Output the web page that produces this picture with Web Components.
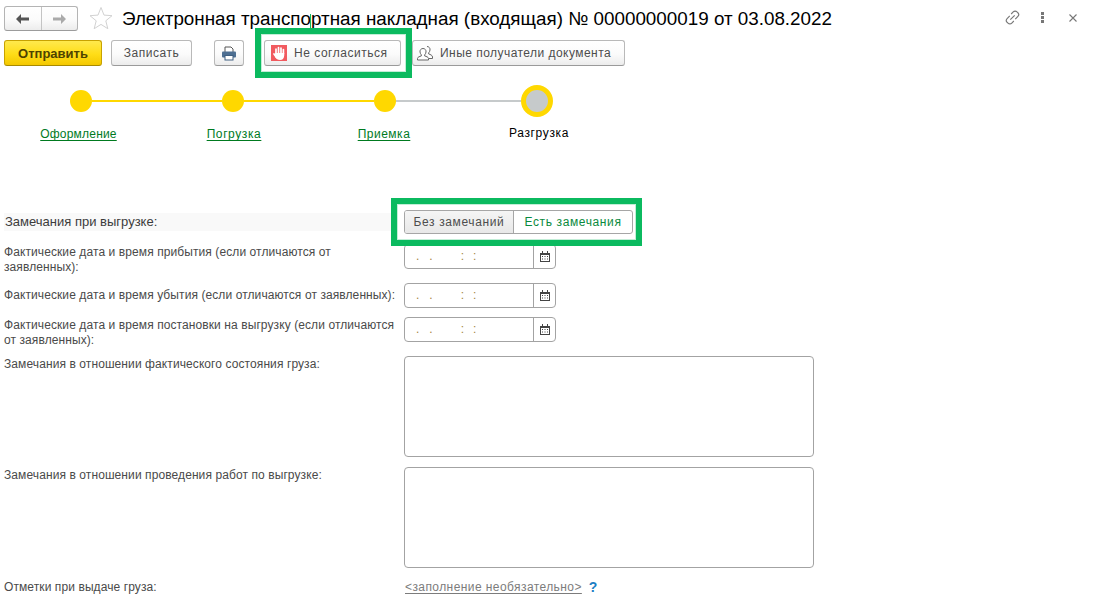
<!DOCTYPE html>
<html lang="ru"><head><meta charset="utf-8"><title>ЭТрН</title>
<style>
html,body{margin:0;padding:0;background:#fff}
body{width:1093px;height:599px;overflow:hidden;position:relative;font:12px "Liberation Sans",Arial,sans-serif;color:#4a4a4a}
</style></head><body>
<doc-page>
  <title-bar slot="title" text="Электронная транспортная накладная (входящая) № 00000000019 от 03.08.2022"></title-bar>
  <tool-bar slot="tools"></tool-bar>
  <step-flow slot="steps"></step-flow>
  <form-row slot="form" style="height:24px;margin-top:0" shaded><span slot="label">Замечания при выгрузке:</span><seg-toggle></seg-toggle></form-row>
  <form-row slot="form" style="height:25px;margin-top:10px"><span slot="label">Фактические дата и время прибытия (если отличаются от заявленных):</span><date-field></date-field></form-row>
  <form-row slot="form" style="height:25px;margin-top:14px" mid><span slot="label">Фактические дата и время убытия (если отличаются от заявленных):</span><date-field></date-field></form-row>
  <form-row slot="form" style="height:25px;margin-top:9px"><span slot="label">Фактические дата и время постановки на выгрузку (если отличаются от заявленных):</span><date-field></date-field></form-row>
  <form-row slot="form" style="height:101px;margin-top:14px"><span slot="label">Замечания в отношении фактического состояния груза:</span><text-box></text-box></form-row>
  <form-row slot="form" style="height:101px;margin-top:10px"><span slot="label">Замечания в отношении проведения работ по выгрузке:</span><text-box></text-box></form-row>
  <form-row slot="form" style="height:15px;margin-top:11px"><span slot="label">Отметки при выдаче груза:</span><opt-link></opt-link></form-row>
  <green-frame slot="over" style="left:255px;top:28px;width:157px;height:50px" tick></green-frame>
  <green-frame slot="over" style="left:391px;top:198px;width:251px;height:48px"></green-frame>
</doc-page>
<script>
function def(name,html){
  customElements.define(name,class extends HTMLElement{
    connectedCallback(){
      if(this.shadowRoot)return;
      const r=this.attachShadow({mode:'open'});
      r.innerHTML=typeof html==='function'?html(this):html;
    }
  });
}
const btnGrad='linear-gradient(#fff 0%,#fbfbfb 55%,#ececec 100%)';
def('doc-page',`<style>:host{display:block;width:1093px;height:599px;position:relative;overflow:hidden}
.form{display:block;margin-top:60px}</style>
<slot name="title"></slot><slot name="tools"></slot><slot name="steps"></slot>
<div class="form"><slot name="form"></slot></div><slot name="over"></slot>`);

def('title-bar',h=>`<style>:host{display:flex;align-items:flex-start;padding:6px 0 0 4px;box-sizing:border-box;height:40px}
.nav{display:flex;width:74px;height:25px;box-sizing:border-box;border:1px solid #b4b4b4;border-radius:3px;border-bottom-color:#9c9c9c;background:${btnGrad}}
.nav b{flex:1;display:flex;align-items:center;justify-content:center}
.nav b+b{border-left:1px solid #c4c4c4}
.star{margin:0 0 0 11px;flex:none}
h1{margin:0 0 0 9px;font:400 18.82px/25px "Liberation Sans",Arial,sans-serif;color:#000;white-space:nowrap}
.r{margin-left:auto;display:flex;align-items:center;height:23px;padding-right:16px}
</style>
<div class="nav"><b><svg width="15" height="12" viewBox="0 0 15 12"><path d="M1 6l5-5v3.400h8v3.200H6V11z" fill="#555"/></svg></b><b><svg width="15" height="12" viewBox="0 0 15 12"><path d="M14 6L9 1v3.400H1v3.200h8V11z" fill="#aaa"/></svg></b></div>
<svg class="star" width="24" height="24" viewBox="0 0 24 24"><path d="M12 1.500l3 7.600 8 .6-6.200 5.100 2 7.900L12 18.400l-6.800 4.300 2-7.900L1 9.700l8-.6z" fill="#fff" stroke="#d2d2d2" stroke-width="1"/></svg>
<h1>${h.getAttribute('text')}</h1>
<div class="r">
<svg width="15" height="15" viewBox="0 0 17 17" fill="none" stroke="#777" stroke-width="1.300"><path d="M7 4.500l2.300-2.300a3 3 0 0 1 4.300 0l1 .9a3 3 0 0 1 0 4.200l-3 3"/><path d="M10 12.500l-2.300 2.300a3 3 0 0 1-4.300 0l-1-.9a3 3 0 0 1 0-4.200l3-3"/><path d="M6 11l5-5"/></svg>
<svg style="margin-left:21px" width="3" height="11" viewBox="0 0 3 11" fill="#777"><rect width="3" height="3"/><rect y="4" width="3" height="3"/><rect y="8" width="3" height="3"/></svg>
<svg style="margin-left:25px" width="8" height="8" viewBox="0 0 8 8" stroke="#777" stroke-width="1.100"><path d="M.5.500l7 7M7.500.500l-7 7"/></svg>
</div>`);

def('tool-btn',h=>{
  const y=h.hasAttribute('primary');
  const start=h.hasAttribute('start');
  return `<style>:host{display:block}
button{display:flex;align-items:center;justify-content:${start?'flex-start':'center'};height:26px;width:100%;box-sizing:border-box;padding:0 0 0 ${start?h.getAttribute('start'):0}px;border:1px solid ${y?'#c8a200':'#b9b9b9'};border-bottom-color:${y?'#a88a00':'#9a9a9a'};border-radius:3px;
background:${y?'linear-gradient(#ffe94d 0%,#ffdd17 55%,#f4c800 100%)':btnGrad};font:${y?'700 13px':'400 12px'} "Liberation Sans",Arial,sans-serif;color:${y?'#4e4300':'#4d4d4d'};letter-spacing:${h.getAttribute('ls')||'.3px'};gap:${h.getAttribute('gap')||'6px'}}
</style><button><slot></slot></button>`});

def('tool-bar',`<style>:host{display:flex;align-items:flex-start;height:26px;padding-left:4px}
tool-btn{flex:none}</style>
<tool-btn primary ls="0" style="width:98px">Отправить</tool-btn>
<tool-btn ls=".5px" style="width:81px;margin-left:9px">Записать</tool-btn>
<tool-btn style="width:30px;margin-left:22px"><svg width="16" height="15" viewBox="0 0 16 15"><path d="M4 6V1h6l2 2v3" fill="#fff" stroke="#555"/><rect x="1" y="5.500" width="14" height="6" rx="1" fill="#4d6f92"/><rect x="4" y="9.500" width="8" height="4.500" fill="#fff" stroke="#3f5f80"/></svg></tool-btn>
<tool-btn start="6" ls=".52px" style="width:137px;margin-left:20px" gap="7px"><svg width="16" height="16" viewBox="0 0 16 16"><rect width="16" height="16" fill="#f15a5f"/><g stroke="#fff" stroke-width="1.700" stroke-linecap="round" fill="none"><path d="M5 9V4.200M7.500 8V2.500M10 8V3M12.400 9V4.500M5.500 12.500L3 9"/></g><path d="M4.200 8h9v2.500C13 13.500 11.500 15 9 15c-2.300 0-3.800-1-4.800-3z" fill="#fff"/></svg>Не согласиться</tool-btn>
<tool-btn start="4" ls=".46px" style="width:213px;margin-left:11px" gap="6px"><svg width="17" height="16" viewBox="0 0 17 16" fill="#fff" stroke="#666" stroke-width="1"><path d="M10 1.500a3 3 0 0 1 3 3.500c-.2 1.300-.7 2.200-1.300 2.800v1.200c1.500.5 3.800 1.200 3.800 3v1.500h-4"/><path d="M6 3.500a3 3 0 0 1 3 3.500c-.2 1.300-.7 2.200-1.300 2.800V11c1.500.5 3.800 1 3.800 2.500V15H.5v-1.500C.5 12 2.800 11.500 4.300 11V9.800C3.700 9.200 3.200 8.300 3 7a3 3 0 0 1 3-3.500z"/></svg>Иные получатели документа</tool-btn>`);

def('step-flow',`<style>:host{display:block;height:65px;margin-top:19px}
.track{display:flex;align-items:center;height:32px;padding-left:70px}
i{display:block;flex:none;width:22px;height:22px;border-radius:50%;background:#ffd800}
u{display:block;flex:none;width:130px;height:2px;background:#ffd800}
u.g{width:125px;background:#c6cacb}
i.cur{width:32px;height:32px;box-sizing:border-box;border:5px solid #ffd800;background:#c6cacb}
.labels{display:grid;grid-template-columns:157px 154px 146px 164px;margin-top:9px;font:12px/16px "Liberation Sans",Arial,sans-serif}
.labels a{justify-self:center;color:#007a1f;text-decoration:underline;text-underline-offset:2px;letter-spacing:.2px}
.labels span{justify-self:center;color:#000;margin-top:-1px;letter-spacing:.65px}
</style>
<div class="track"><i></i><u></u><i></i><u></u><i></i><u class="g"></u><i class="cur"></i></div>
<div class="labels"><a>Оформление</a><a style="letter-spacing:.6px">Погрузка</a><a style="letter-spacing:.5px">Приемка</a><span>Разгрузка</span></div>`);

def('form-row',h=>`<style>:host{display:grid;grid-template-columns:396px 4px auto;padding-left:4px}
.l{font:12px/15px "Liberation Sans",Arial,sans-serif;color:#4a4a4a;letter-spacing:.09px;padding-top:${h.hasAttribute('mid')?5:1}px}
:host([shaded]) .l{align-self:center;background:#f9f9f9;height:18px;font-size:13px;line-height:18px;padding:0 0 0 1px;margin-right:6px;color:#3c3c3c;letter-spacing:0}
.c{grid-column:3;width:fit-content;height:100%}
</style><div class="l"><slot name="label"></slot></div><div class="c"><slot></slot></div>`);

def('seg-toggle',`<style>:host{display:flex;width:229px;height:24px;box-sizing:border-box;border:1px solid #a6a6a6;border-radius:3px;overflow:hidden;font:12px/23px "Liberation Sans",Arial,sans-serif;letter-spacing:.62px}
span{display:block;text-align:center}
.a{width:108px;background:linear-gradient(#f5f5f5,#e8e8e8);color:#4d4d4d;border-right:1px solid #a6a6a6}
.b{flex:1;color:#0a8a3e}</style><span class="a">Без замечаний</span><span class="b">Есть замечания</span>`);

def('date-field',`<style>:host{display:flex;width:152px;height:25px;box-sizing:border-box;border:1px solid #a3a3a3;border-radius:4px;background:#fff}
.m{width:129px;box-sizing:border-box;border-right:1px solid #a3a3a3;padding-left:11px;font:12px/22px "Liberation Sans",Arial,sans-serif;color:#a8863f;display:flex}
.m span:nth-child(2){margin-left:10px}.m span:nth-child(3){margin-left:28px}.m span:nth-child(4){margin-left:9px}
.b{flex:1;display:flex;align-items:center;justify-content:center}</style>
<div class="m"><span>.</span><span>.</span><span>:</span><span>:</span></div>
<div class="b"><svg width="10" height="11" viewBox="0 0 10 11"><path d="M0 2h2V0h1v2h4V0h1v2h2v9H0z" fill="#444"/><path d="M1 4h8v6H1z" fill="#fff"/><path d="M2 5h1v1H2zM4.500 5h1v1h-1zM7 5h1v1H7zM2 7.500h1v1H2zM4.500 7.500h1v1h-1zM7 7.500h1v1H7z" fill="#444"/></svg></div>`);

def('text-box',`<style>:host{display:block;width:410px;height:101px;box-sizing:border-box;border:1px solid #a3a3a3;border-radius:4px;background:#fff}</style>`);

def('opt-link',`<style>:host{display:flex;align-items:center;height:15px;padding:1px 0 0 1px;font:12px/15px "Liberation Sans",Arial,sans-serif}
a{color:#7c7c7c;text-decoration:underline;letter-spacing:.42px;text-underline-offset:2px}
b{font-weight:700;color:#1d7fc4;margin-left:7px;font-size:14px}</style><a>&lt;заполнение необязательно&gt;</a><b>?</b>`);

def('green-frame',h=>`<style>:host{display:block;position:absolute;box-sizing:border-box;border:6px solid #0bba5f;outline:1px solid rgba(11,186,95,.25);outline-offset:-7px}
.t{position:absolute;left:49px;top:-20px;width:1px;height:14px;background:#0bba5f}</style>${h.hasAttribute('tick')?'<div class="t"></div>':''}`);
</script>
</body></html>
